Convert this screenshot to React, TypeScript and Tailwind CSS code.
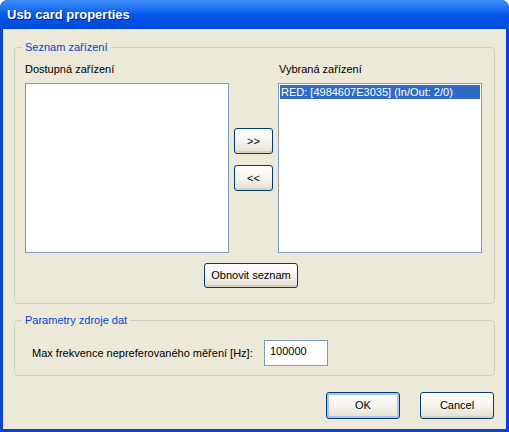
import React from "react";

const font = "font-['Tahoma','Liberation_Sans','DejaVu_Sans',sans-serif]";

const XpButton = ({
    label,
    isDefault,
    className
}: {
    label: string;
    isDefault?: boolean;
    className: string;
}) => (
    <button
        className={`${className} rounded-[3px] border border-[#003C74] bg-gradient-to-b from-[#FFFFFF] via-[#F5F4EF] to-[#E3E0D3] text-[11px] leading-none text-black ${
            isDefault ? "shadow-[inset_0_0_0_2px_#A9C4F2]" : "shadow-[inset_0_-2px_0_#D8D2BD]"
        }`}
    >
        {label}
    </button>
);

const ListBox = ({ items }: { items: string[] }) => (
    <div className="h-[170px] w-[204px] border border-[#7F9DB9] bg-white p-[1px]">
        {items.map((item) => (
            <div key={item} className="h-[14px] bg-[#316AC5] px-[1px] text-[11px] leading-[14px] text-white whitespace-nowrap">
                {item}
            </div>
        ))}
    </div>
);

const App = () => {
    return (
        <div className={`${font} flex h-[432px] w-[509px] flex-col overflow-hidden rounded-t-[8px] bg-[#0843D6]`}>
            {/* title bar */}
            <div className="flex h-[29px] items-center bg-gradient-to-b from-[#3D8EF8] via-[#0559EB] to-[#0048D8] pl-[7px] pt-[1px]">
                <span className="font-['Liberation_Sans','DejaVu_Sans',sans-serif] text-[13px] font-bold text-white [text-shadow:1px_1px_0_#0A1E8C]">
                    Usb card properties
                </span>
            </div>

            <div className="mx-[3px] mb-[3px] flex flex-1 flex-col bg-[#ECE9D8] pt-[11px] text-[11px] text-black">
                {/* devices group */}
                <fieldset className="mx-[11px] rounded-[4px] border border-[#D0D0BF] px-[10px] pb-[15px]">
                    <legend className="ml-[-3px] px-[3px] text-[11px] leading-[14px] text-[#0046D5]">Seznam zařízení</legend>
                    <div className="flex pt-[8px]">
                        <div className="flex flex-col">
                            <div className="h-[14px] leading-[14px]">Dostupná zařízení</div>
                            <div className="mt-[7px]">
                                <ListBox items={[]} />
                            </div>
                        </div>
                        <div className="ml-[5px] mr-[5px] flex flex-col gap-[11px] pt-[66px]">
                            <XpButton label=">>" className="h-[26px] w-[39px]" />
                            <XpButton label="<<" className="h-[26px] w-[39px]" />
                        </div>
                        <div className="flex flex-col">
                            <div className="h-[14px] pl-[1px] leading-[14px]">Vybraná zařízení</div>
                            <div className="mt-[7px]">
                                <ListBox items={["RED: [4984607E3035] (In/Out: 2/0)"]} />
                            </div>
                        </div>
                    </div>
                    <div className="mt-[10px] flex pl-[179px]">
                        <XpButton label="Obnovit seznam" className="h-[25px] w-[94px]" />
                    </div>
                </fieldset>

                {/* data source group */}
                <fieldset className="mx-[11px] mt-[9px] flex rounded-[4px] border border-[#D0D0BF] px-[17px] pb-[9px]">
                    <legend className="ml-[-10px] px-[3px] text-[11px] leading-[14px] text-[#0046D5]">Parametry zdroje dat</legend>
                    <div className="flex items-center pt-[13px]">
                        <span className="w-[232px]">Max frekvence nepreferovaného měření [Hz]:</span>
                        <input
                            defaultValue="100000"
                            className="h-[26px] w-[64px] border border-[#7F9DB9] bg-white px-[5px] pb-[5px] text-[11px] outline-none"
                        />
                    </div>
                </fieldset>

                {/* dialog buttons */}
                <div className="mt-[16px] flex justify-end gap-[20px] pr-[12px]">
                    <XpButton label="OK" isDefault className="h-[27px] w-[74px]" />
                    <XpButton label="Cancel" className="h-[27px] w-[74px]" />
                </div>
            </div>
        </div>
    );
};

export default App;
